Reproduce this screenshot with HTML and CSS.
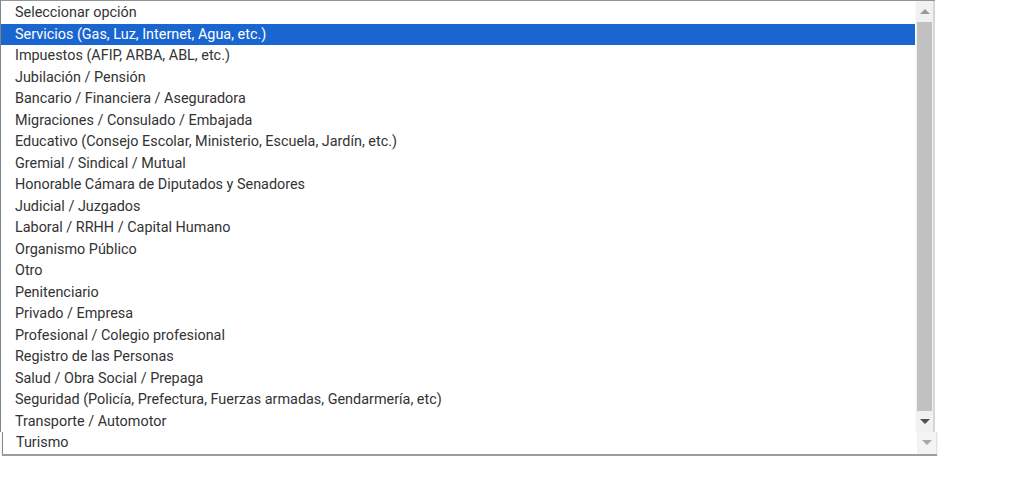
FILE: index.html
```html
<!DOCTYPE html>
<html>
<head>
    <title>Seleccionar opción</title>
    <link rel="stylesheet" href="styles.css">
</head>
<body>
    <div class="popup">
        <div class="main">
            <ul class="options">
                <li>Seleccionar opción</li>
                <li class="selected">Servicios (Gas, Luz, Internet, Agua, etc.)</li>
                <li>Impuestos (AFIP, ARBA, ABL, etc.)</li>
                <li>Jubilación / Pensión</li>
                <li>Bancario / Financiera / Aseguradora</li>
                <li>Migraciones / Consulado / Embajada</li>
                <li>Educativo (Consejo Escolar, Ministerio, Escuela, Jardín, etc.)</li>
                <li>Gremial / Sindical / Mutual</li>
                <li>Honorable Cámara de Diputados y Senadores</li>
                <li>Judicial / Juzgados</li>
                <li>Laboral / RRHH / Capital Humano</li>
                <li>Organismo Público</li>
                <li>Otro</li>
                <li>Penitenciario</li>
                <li>Privado / Empresa</li>
                <li>Profesional / Colegio profesional</li>
                <li>Registro de las Personas</li>
                <li>Salud / Obra Social / Prepaga</li>
                <li>Seguridad (Policía, Prefectura, Fuerzas armadas, Gendarmería, etc)</li>
                <li>Transporte / Automotor</li>
            </ul>
            <div class="scrollbar">
                <div class="arrow up"></div>
                <div class="thumb"></div>
                <div class="arrow down"></div>
            </div>
        </div>
        <div class="tail">
            <div class="tail-option">Turismo</div>
            <div class="tail-scroll">
                <div class="arrow down faded"></div>
            </div>
        </div>
    </div>
</body>
</html>
```

FILE: styles.css
```css
* {
    margin: 0;
    padding: 0;
    box-sizing: border-box;
}

body {
    background: #ffffff;
    font-family: Roboto, "Noto Sans", sans-serif;
    font-size: 14.4px;
    color: #333333;
}

.popup {
    width: 935px;
}

/* Main list */
.main {
    display: flex;
    border-top: 1px solid #8c9898;
    border-left: 1px solid #7d8585;
    height: 432px;
}

.options {
    flex: 1;
    list-style: none;
    padding-top: 1px;
}

.options li {
    height: 21.5px;
    line-height: 21.5px;
    padding-left: 14px;
    white-space: nowrap;
}

.options li.selected {
    background: #1a66d0;
    color: #ffffff;
}

/* Scrollbar */
.scrollbar {
    width: 20px;
    display: flex;
    flex-direction: column;
    align-items: center;
    background: #f1f1f1;
    border-left: 1px solid #fafafa;
    border-right: 2px solid #d6d6d6;
}

.arrow {
    height: 21px;
    width: 100%;
    display: flex;
    align-items: center;
    justify-content: center;
}

.arrow::before {
    content: "";
    border-left: 5px solid transparent;
    border-right: 5px solid transparent;
}

.arrow.up::before {
    border-bottom: 5px solid #9a9a9a;
}

.arrow.down::before {
    border-top: 5px solid #505050;
}

.arrow.down.faded::before {
    border-top-color: #a8a8a8;
}

.thumb {
    flex: 1;
    width: 15px;
    background: #c1c1c1;
}

/* Last row */
.tail {
    display: flex;
    margin-left: 2px;
    width: 935px;
    height: 24px;
    border-left: 1px solid #8a8a8a;
    border-bottom: 2px solid #9c9c9c;
    box-shadow: 0 1px 2px rgba(0, 0, 0, 0.15);
}

.tail-option {
    flex: 1;
    line-height: 21.5px;
    padding-left: 13px;
}

.tail-scroll {
    width: 20px;
    background: #f3f3f3;
    border-right: 1px solid #e2e2e2;
}
```
